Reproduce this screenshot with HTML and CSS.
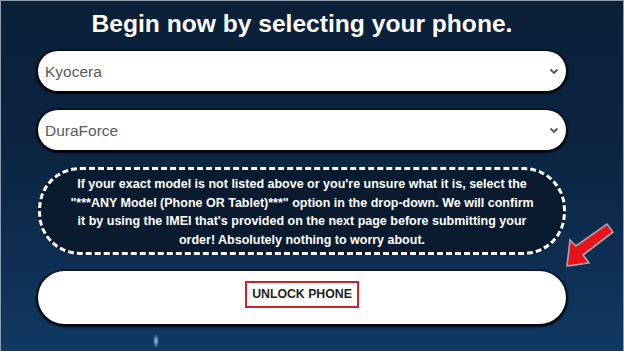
FILE: index.html
```html
<!DOCTYPE html>
<html>
<head>
<meta charset="utf-8">
<link rel="stylesheet" href="styles.css">
</head>
<body>
<div class="page">
  <div class="form">
    <h1 class="title">Begin now by selecting your phone.</h1>
    <div class="select-wrap first">
      <select class="select"><option>Kyocera</option></select>
      <svg class="chev" width="10" height="7" viewBox="0 0 10 7"><path d="M1.5 1.5 L5 5 L8.5 1.5" fill="none" stroke="#555" stroke-width="1.8"/></svg>
    </div>
    <div class="select-wrap second">
      <select class="select"><option>DuraForce</option></select>
      <svg class="chev" width="10" height="7" viewBox="0 0 10 7"><path d="M1.5 1.5 L5 5 L8.5 1.5" fill="none" stroke="#555" stroke-width="1.8"/></svg>
    </div>
    <div class="note">If your exact model is not listed above or you're unsure what it is, select the<br>"***ANY Model (Phone OR Tablet)***" option in the drop-down. We will confirm<br>it by using the IMEI that's provided on the next page before submitting your<br>order! Absolutely nothing to worry about.</div>
    <button class="unlock"><span class="unlock-label">UNLOCK PHONE</span></button>
  </div>
  <svg class="arrow" width="52" height="50" viewBox="0 0 52 50"><polygon points="2,45 5,19 11,25 42,3 48,11 18,34 24,42" fill="#e8121a" stroke="#a9a9ad" stroke-width="1.6" stroke-linejoin="miter"/></svg>
</div>
</body>
</html>
```
FILE: styles.css
```css
html, body {
  margin: 0;
  padding: 0;
}
body {
  width: 624px;
  height: 351px;
  overflow: hidden;
  font-family: "Liberation Sans", Arial, sans-serif;
}
.page {
  position: relative;
  box-sizing: border-box;
  width: 624px;
  height: 351px;
  border: 1px solid #8f9cab;
  border-bottom: none;
  padding: 9px 0 0 37px;
  background:
    radial-gradient(ellipse 3px 7px at 155px 340px, rgba(170, 212, 240, 0.95), rgba(170, 212, 240, 0) 100%),
    linear-gradient(180deg, #0b1f38 0%, #0c2441 40%, #0e2f52 75%, #103a63 100%);
}
.title {
  margin: 0;
  text-align: center;
  color: #ffffff;
  font-size: 24.6px;
  font-weight: bold;
  line-height: 28px;
}
.form {
  width: 528px;
  display: flex;
  flex-direction: column;
}
.select-wrap {
  position: relative;
  height: 40px;
  border-radius: 20px;
  background: #ffffff;
  box-shadow: 0 1px 2px 2px rgba(0, 0, 0, 0.85);
}
.select-wrap.first { margin-top: 13px; }
.select-wrap.second { margin-top: 19px; }
.select {
  appearance: none;
  -webkit-appearance: none;
  width: 100%;
  height: 40px;
  border: none;
  background: transparent;
  border-radius: 20px;
  padding: 0 0 0 7px;
  font-family: "Liberation Sans", Arial, sans-serif;
  font-size: 15.5px;
  color: #5a5a5a;
  outline: none;
}
.chev {
  position: absolute;
  right: 7px;
  top: 17px;
}
.note {
  margin-top: 17px;
  box-sizing: border-box;
  height: 88px;
  border: 3px dashed #ffffff;
  border-radius: 42px;
  background: #0a1b2f;
  color: #ffffff;
  font-size: 12.5px;
  font-weight: bold;
  line-height: 18.5px;
  text-align: center;
  padding-top: 5px;
  white-space: nowrap;
}
.unlock {
  margin-top: 16px;
  height: 53px;
  border: none;
  border-radius: 27px;
  background: #ffffff;
  box-shadow: 0 1px 2px 2px rgba(0, 0, 0, 0.85);
  display: flex;
  align-items: center;
  justify-content: center;
  padding: 0 0 6px 0;
}
.unlock-label {
  display: block;
  border: 2px solid #c9242c;
  padding: 0 5px;
  height: 23px;
  line-height: 23px;
  font-family: "Liberation Sans", Arial, sans-serif;
  font-size: 12.3px;
  font-weight: bold;
  color: #222222;
}
.arrow {
  position: absolute;
  left: 564px;
  top: 220px;
}
```
